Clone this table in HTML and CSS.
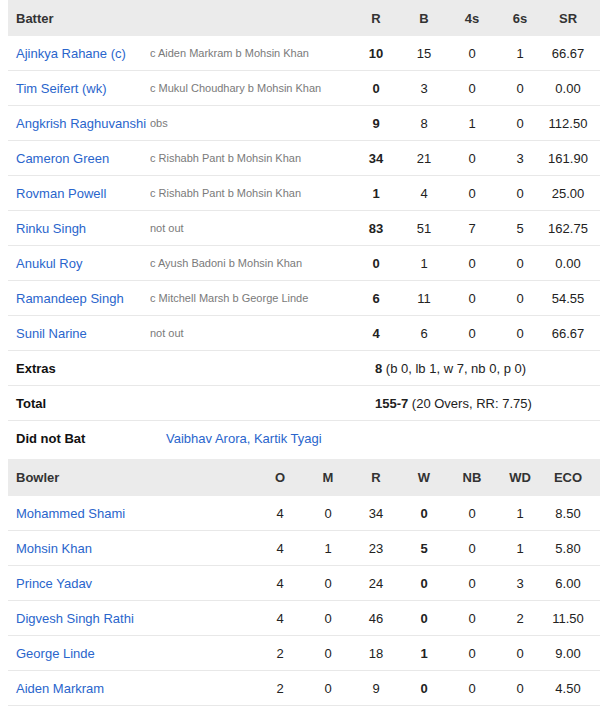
FILE: index.html
```html
<!DOCTYPE html>
<html>
<head>
<meta charset="utf-8">
<link rel="stylesheet" href="styles.css">
</head>
<body>
<div class="card">
  <div class="bat row head top">
    <div class="name">Batter</div><div></div><div class="c">R</div><div class="c">B</div><div class="c">4s</div><div class="c">6s</div><div class="c sr">SR</div>
  </div>
  <div class="bat row"><a class="name">Ajinkya Rahane (c)</a><div class="how">c Aiden Markram b Mohsin Khan</div><div class="c b">10</div><div class="c">15</div><div class="c">0</div><div class="c">1</div><div class="c sr">66.67</div></div>
  <div class="bat row"><a class="name">Tim Seifert (wk)</a><div class="how">c Mukul Choudhary b Mohsin Khan</div><div class="c b">0</div><div class="c">3</div><div class="c">0</div><div class="c">0</div><div class="c sr">0.00</div></div>
  <div class="bat row"><a class="name">Angkrish Raghuvanshi</a><div class="how">obs</div><div class="c b">9</div><div class="c">8</div><div class="c">1</div><div class="c">0</div><div class="c sr">112.50</div></div>
  <div class="bat row"><a class="name">Cameron Green</a><div class="how">c Rishabh Pant b Mohsin Khan</div><div class="c b">34</div><div class="c">21</div><div class="c">0</div><div class="c">3</div><div class="c sr">161.90</div></div>
  <div class="bat row"><a class="name">Rovman Powell</a><div class="how">c Rishabh Pant b Mohsin Khan</div><div class="c b">1</div><div class="c">4</div><div class="c">0</div><div class="c">0</div><div class="c sr">25.00</div></div>
  <div class="bat row"><a class="name">Rinku Singh</a><div class="how">not out</div><div class="c b">83</div><div class="c">51</div><div class="c">7</div><div class="c">5</div><div class="c sr">162.75</div></div>
  <div class="bat row"><a class="name">Anukul Roy</a><div class="how">c Ayush Badoni b Mohsin Khan</div><div class="c b">0</div><div class="c">1</div><div class="c">0</div><div class="c">0</div><div class="c sr">0.00</div></div>
  <div class="bat row"><a class="name">Ramandeep Singh</a><div class="how">c Mitchell Marsh b George Linde</div><div class="c b">6</div><div class="c">11</div><div class="c">0</div><div class="c">0</div><div class="c sr">54.55</div></div>
  <div class="bat row"><a class="name">Sunil Narine</a><div class="how">not out</div><div class="c b">4</div><div class="c">6</div><div class="c">0</div><div class="c">0</div><div class="c sr">66.67</div></div>
  <div class="sum row"><div class="label">Extras</div><div class="val"><b>8</b> (b 0, lb 1, w 7, nb 0, p 0)</div></div>
  <div class="sum row"><div class="label">Total</div><div class="val"><b>155-7</b> (20 Overs, RR: 7.75)</div></div>
  <div class="dnb row last"><div class="label">Did not Bat</div><a class="link">Vaibhav Arora, Kartik Tyagi</a></div>

  <div class="bowl row head">
    <div class="name">Bowler</div><div class="c">O</div><div class="c">M</div><div class="c">R</div><div class="c">W</div><div class="c">NB</div><div class="c">WD</div><div class="c sr">ECO</div>
  </div>
  <div class="bowl row"><a class="name">Mohammed Shami</a><div class="c">4</div><div class="c">0</div><div class="c">34</div><div class="c b">0</div><div class="c">0</div><div class="c">1</div><div class="c sr">8.50</div></div>
  <div class="bowl row"><a class="name">Mohsin Khan</a><div class="c">4</div><div class="c">1</div><div class="c">23</div><div class="c b">5</div><div class="c">0</div><div class="c">1</div><div class="c sr">5.80</div></div>
  <div class="bowl row"><a class="name">Prince Yadav</a><div class="c">4</div><div class="c">0</div><div class="c">24</div><div class="c b">0</div><div class="c">0</div><div class="c">3</div><div class="c sr">6.00</div></div>
  <div class="bowl row"><a class="name">Digvesh Singh Rathi</a><div class="c">4</div><div class="c">0</div><div class="c">46</div><div class="c b">0</div><div class="c">0</div><div class="c">2</div><div class="c sr">11.50</div></div>
  <div class="bowl row"><a class="name">George Linde</a><div class="c">2</div><div class="c">0</div><div class="c">18</div><div class="c b">1</div><div class="c">0</div><div class="c">0</div><div class="c sr">9.00</div></div>
  <div class="bowl row"><a class="name">Aiden Markram</a><div class="c">2</div><div class="c">0</div><div class="c">9</div><div class="c b">0</div><div class="c">0</div><div class="c">0</div><div class="c sr">4.50</div></div>
</div>
</body>
</html>
```

FILE: styles.css
```css
html, body {
  margin: 0;
  padding: 0;
  background: #fff;
}
body {
  font-family: "Liberation Sans", Arial, sans-serif;
  font-size: 13px;
  color: #222;
}
.card {
  margin-left: 8px;
  width: 592px;
}
.row {
  display: grid;
  align-items: center;
  height: 35px;
  box-sizing: border-box;
  border-bottom: 1px solid #e8e8e8;
}
.row.head {
  height: 37px;
  background: #ebebeb;
  border-bottom: none;
  font-weight: bold;
  color: #333;
}
.row.head.top {
  height: 36px;
}
.row.last {
  border-bottom: none;
  height: 35px;
  margin-bottom: 3px;
}
.bat {
  grid-template-columns: 142px 202px 48px 48px 48px 48px 56px;
}
.bowl {
  grid-template-columns: 248px 48px 48px 48px 48px 48px 48px 56px;
}
.name {
  padding-left: 8px;
  white-space: nowrap;
}
a.name, a.link {
  color: #2a65cc;
  text-decoration: none;
}
.how {
  font-size: 11px;
  color: #7a7a7a;
  white-space: nowrap;
  overflow: hidden;
}
.c {
  text-align: center;
}
.sr {
  padding-right: 8px;
}
.b {
  font-weight: bold;
}
.sum {
  grid-template-columns: 367px 1fr;
}
.dnb {
  grid-template-columns: 158px 1fr;
}
.label {
  padding-left: 8px;
  font-weight: bold;
  color: #111;
}
.val {
  color: #222;
}
```
